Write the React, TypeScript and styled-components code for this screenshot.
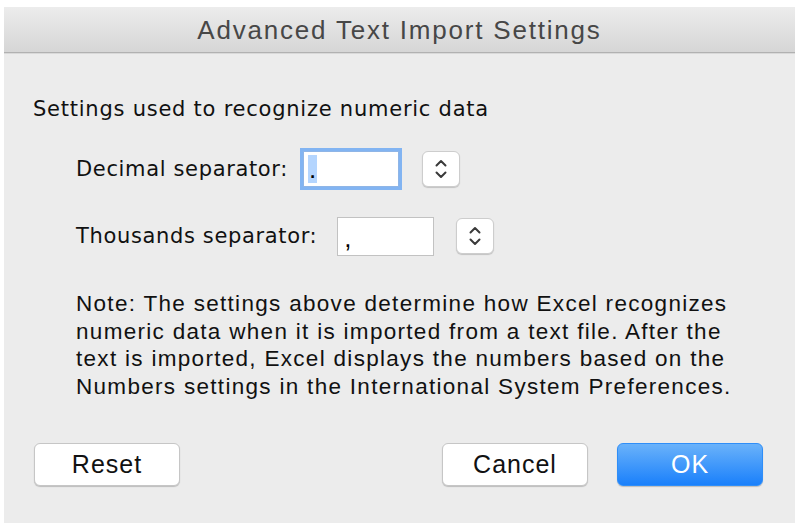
import React from "react";
import styled, { createGlobalStyle } from "styled-components";

const Global = createGlobalStyle`
  html, body { margin: 0; padding: 0; background: #ffffff; }
  #root { width: 800px; height: 527px; }
`;

const Window = styled.div`
  margin: 7px 5px 0 4px;
  width: 791px;
  height: 516px;
  background: #ececec;
  display: flex;
  flex-direction: column;
  box-sizing: border-box;
`;

const TitleBar = styled.div`
  height: 44px;
  flex: none;
  background: linear-gradient(#ececec, #d6d6d6);
  border-bottom: 1px solid #b1b1b1;
  box-shadow: 0 1px 0 #d9d9d9;
  display: flex;
  align-items: center;
  justify-content: center;
  font-family: "Liberation Sans", Arial, sans-serif;
  font-size: 26px;
  letter-spacing: 1.8px;
  color: #474747;
  padding-top: 1px;
`;

const Body = styled.div`
  flex: 1;
  display: flex;
  flex-direction: column;
  padding: 44px 0 0 29px;
`;

const Heading = styled.div`
  font-family: "DejaVu Sans", Verdana, sans-serif;
  font-size: 21px;
  line-height: 24px;
  color: #111;
  letter-spacing: 0.76px;
`;

const Rows = styled.div`
  display: flex;
  flex-direction: column;
  gap: 27px;
  margin: 28px 0 0 43px;
`;

const Row = styled.div`
  display: flex;
  align-items: center;
  height: 40px;
`;

const Label = styled.span<{ $gap: number }>`
  font-family: "DejaVu Sans", Verdana, sans-serif;
  font-size: 21px;
  color: #111;
  letter-spacing: 0.65px;
  margin-right: ${(p) => p.$gap}px;
`;

const Field = styled.div<{ $focused?: boolean; $w: number }>`
  width: ${(p) => p.$w}px;
  height: ${(p) => (p.$focused ? 34 : 37)}px;
  background: #fff;
  box-sizing: content-box;
  border: 1px solid ${(p) => (p.$focused ? "#8fb5e6" : "#c2c2c2")};
  box-shadow: ${(p) => (p.$focused ? "0 0 0 3px #82b4f2" : "none")};
  margin: ${(p) => (p.$focused ? "0 3px" : "0")};
  display: flex;
  align-items: flex-end;
  padding-left: 4px;
  font-family: "Liberation Sans", Arial, sans-serif;
  font-size: 26px;
  color: #000;
`;

const Selected = styled.span`
  background: #b4d5fe;
  display: inline-block;
  width: 9px;
  height: 28px;
  line-height: 28px;
  margin-bottom: 3px;
  text-align: center;
`;

const Plain = styled.span`
  display: inline-block;
  line-height: 28px;
  margin-bottom: 3px;
  padding-left: 2px;
`;

const Stepper = styled.button<{ $ml: number }>`
  margin-left: ${(p) => p.$ml}px;
  width: 38px;
  height: 36px;
  padding: 0;
  background: #fff;
  border: 1px solid #cdcdcd;
  border-radius: 6px;
  box-shadow: 0 1px 1px rgba(0, 0, 0, 0.18);
  display: flex;
  align-items: center;
  justify-content: center;
`;

const Note = styled.p`
  margin: 34px 0 0 43px;
  font-family: "Liberation Sans", Arial, sans-serif;
  font-size: 22.5px;
  line-height: 27.5px;
  letter-spacing: 1.3px;
  color: #111;
`;

const Buttons = styled.div`
  display: flex;
  align-items: center;
  margin: 43px 0 0 1px;
  padding-right: 32px;
`;

const Spacer = styled.div`
  flex: 1;
`;

const Btn = styled.button<{ $primary?: boolean; $ml?: number }>`
  width: 146px;
  height: 43px;
  margin-left: ${(p) => p.$ml ?? 0}px;
  border-radius: 6px;
  font-family: "Liberation Sans", Arial, sans-serif;
  font-size: 25px;
  letter-spacing: 1px;
  cursor: default;
  padding: 0;
  color: ${(p) => (p.$primary ? "#fff" : "#111")};
  background: ${(p) =>
    p.$primary ? "linear-gradient(#6ab2fa, #1a80fb)" : "#fff"};
  border: 1px solid ${(p) => (p.$primary ? "#2f8ef8" : "#c6c6c6")};
  box-shadow: 0 1px 1px rgba(0, 0, 0, 0.2);
`;

const Chevrons = () => (
  <svg width="14" height="22" viewBox="0 0 14 22" fill="none">
    <path d="M2.5 7.5 L7 3 L11.5 7.5" stroke="#3a3a3a" strokeWidth="2" strokeLinecap="round" strokeLinejoin="round" />
    <path d="M2.5 14.5 L7 19 L11.5 14.5" stroke="#3a3a3a" strokeWidth="2" strokeLinecap="round" strokeLinejoin="round" />
  </svg>
);

export default function App() {
  return (
    <>
      <Global />
      <Window>
        <TitleBar>Advanced Text Import Settings</TitleBar>
        <Body>
          <Heading>Settings used to recognize numeric data</Heading>
          <Rows>
            <Row>
              <Label $gap={12}>Decimal separator:</Label>
              <Field $focused $w={90}>
                <Selected>.</Selected>
              </Field>
              <Stepper $ml={20}>
                <Chevrons />
              </Stepper>
            </Row>
            <Row>
              <Label $gap={20}>Thousands separator:</Label>
              <Field $w={91}>
                <Plain>,</Plain>
              </Field>
              <Stepper $ml={22}>
                <Chevrons />
              </Stepper>
            </Row>
          </Rows>
          <Note>
            Note: The settings above determine how Excel recognizes
            <br />
            numeric data when it is imported from a text file. After the
            <br />
            text is imported, Excel displays the numbers based on the
            <br />
            Numbers settings in the International System Preferences.
          </Note>
          <Buttons>
            <Btn>Reset</Btn>
            <Spacer />
            <Btn>Cancel</Btn>
            <Btn $primary $ml={29}>
              OK
            </Btn>
          </Buttons>
        </Body>
      </Window>
    </>
  );
}
